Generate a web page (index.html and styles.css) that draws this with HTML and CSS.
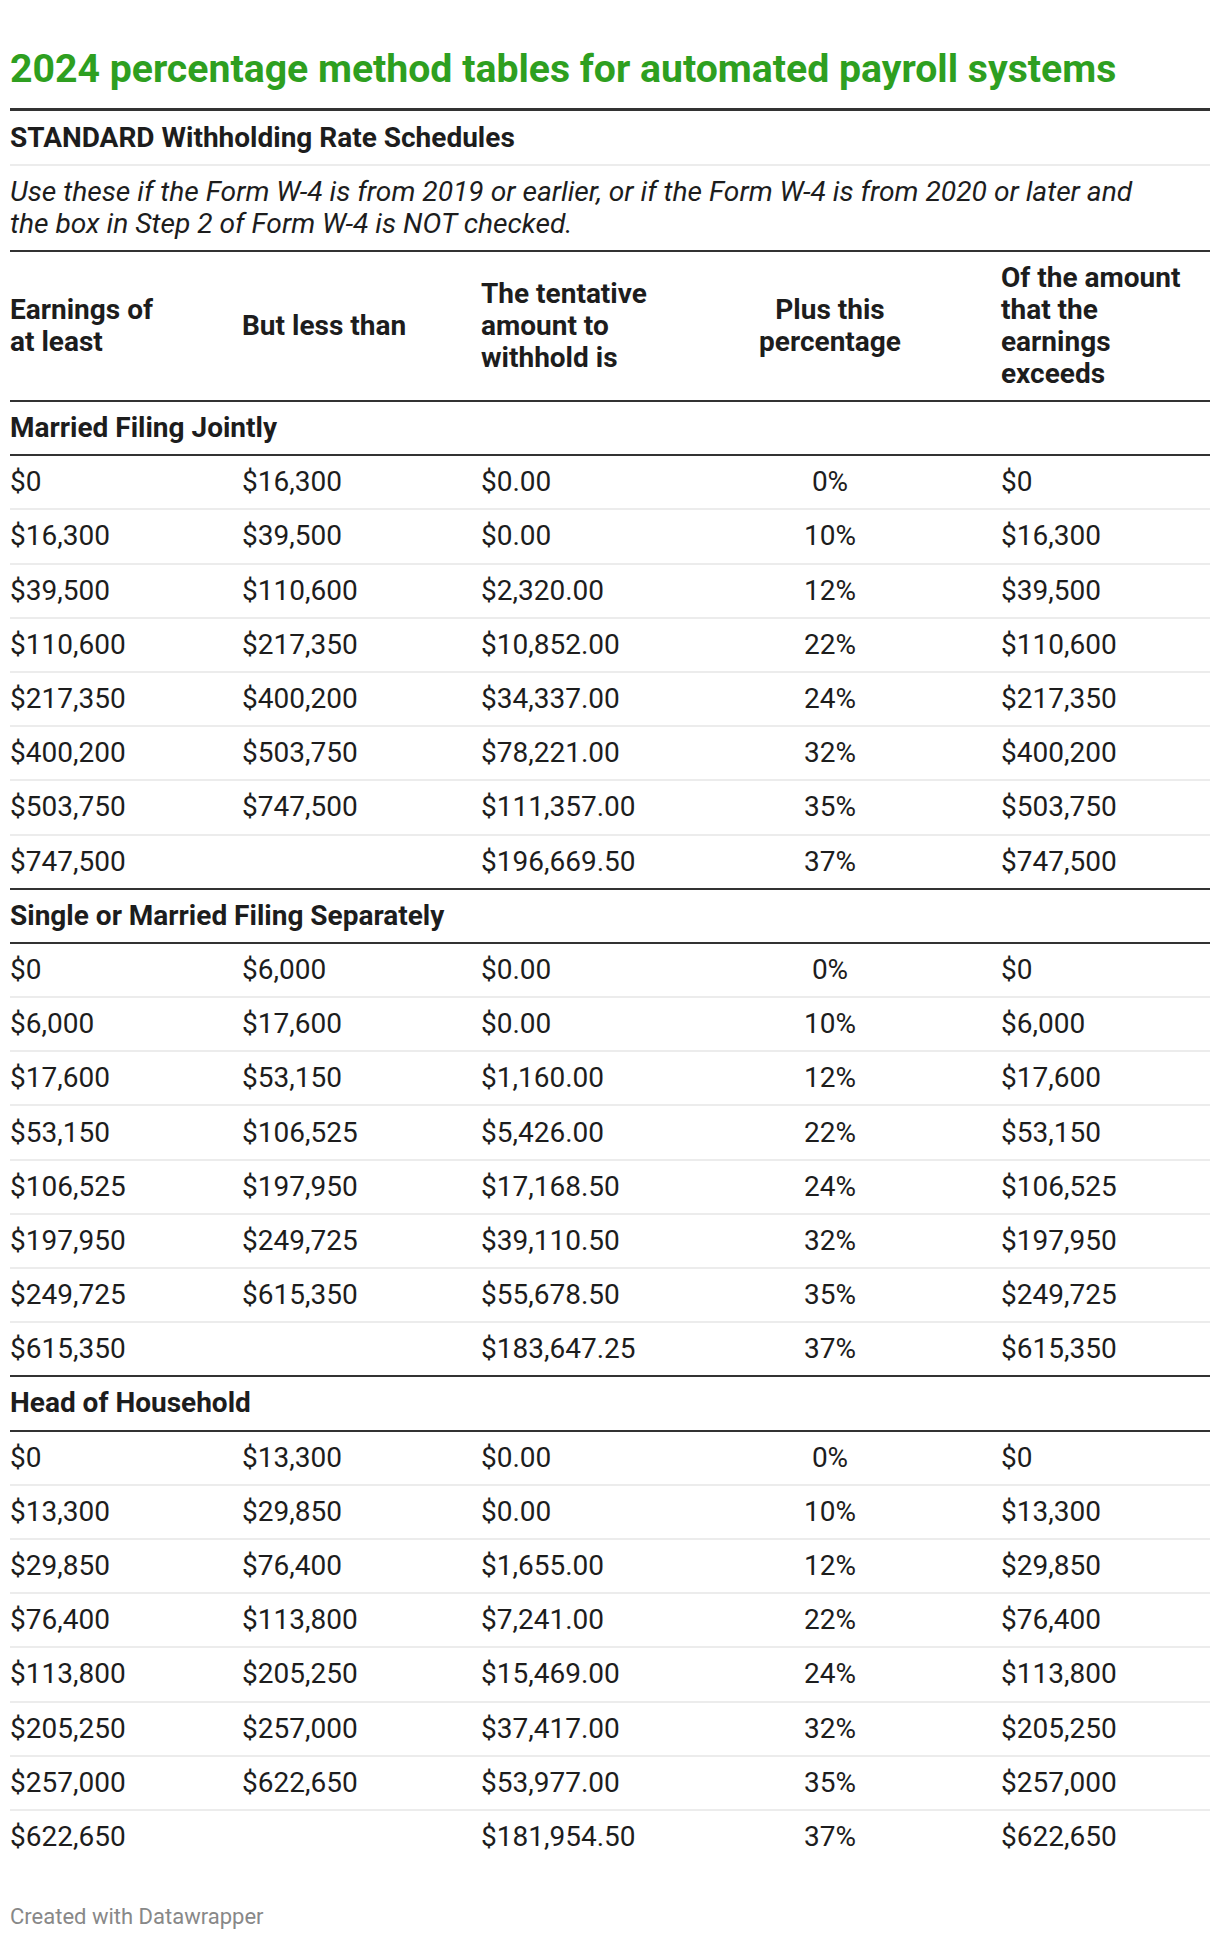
FILE: index.html
```html
<!DOCTYPE html>
<html lang="en">
<head>
<meta charset="utf-8">
<title>2024 percentage method tables for automated payroll systems</title>
<link rel="stylesheet" href="styles.css">
</head>
<body>
<div class="chart">
  <h1 class="title">2024 percentage method tables for automated payroll systems</h1>
  <div class="subhead">STANDARD Withholding Rate Schedules</div>
  <p class="intro">Use these if the Form W-4 is from 2019 or earlier, or if the Form W-4 is from 2020 or later and the box in Step 2 of Form W-4 is NOT checked.</p>
  <table class="rates">
    <colgroup>
      <col class="c1"><col class="c2"><col class="c3"><col class="c4"><col class="c5">
    </colgroup>
    <thead>
      <tr>
        <th class="h1">Earnings of at least</th>
        <th class="h2">But less than</th>
        <th class="h3">The tentative amount to withhold is</th>
        <th class="h4">Plus this percentage</th>
        <th class="h5">Of the amount that the earnings exceeds</th>
      </tr>
    </thead>
    <tbody>
      <tr class="group"><th colspan="5">Married Filing Jointly</th></tr>
      <tr><td>$0</td><td>$16,300</td><td>$0.00</td><td class="pct">0%</td><td>$0</td></tr>
      <tr><td>$16,300</td><td>$39,500</td><td>$0.00</td><td class="pct">10%</td><td>$16,300</td></tr>
      <tr><td>$39,500</td><td>$110,600</td><td>$2,320.00</td><td class="pct">12%</td><td>$39,500</td></tr>
      <tr><td>$110,600</td><td>$217,350</td><td>$10,852.00</td><td class="pct">22%</td><td>$110,600</td></tr>
      <tr><td>$217,350</td><td>$400,200</td><td>$34,337.00</td><td class="pct">24%</td><td>$217,350</td></tr>
      <tr><td>$400,200</td><td>$503,750</td><td>$78,221.00</td><td class="pct">32%</td><td>$400,200</td></tr>
      <tr><td>$503,750</td><td>$747,500</td><td>$111,357.00</td><td class="pct">35%</td><td>$503,750</td></tr>
      <tr class="last"><td>$747,500</td><td></td><td>$196,669.50</td><td class="pct">37%</td><td>$747,500</td></tr>
    </tbody>
    <tbody>
      <tr class="group"><th colspan="5">Single or Married Filing Separately</th></tr>
      <tr><td>$0</td><td>$6,000</td><td>$0.00</td><td class="pct">0%</td><td>$0</td></tr>
      <tr><td>$6,000</td><td>$17,600</td><td>$0.00</td><td class="pct">10%</td><td>$6,000</td></tr>
      <tr><td>$17,600</td><td>$53,150</td><td>$1,160.00</td><td class="pct">12%</td><td>$17,600</td></tr>
      <tr><td>$53,150</td><td>$106,525</td><td>$5,426.00</td><td class="pct">22%</td><td>$53,150</td></tr>
      <tr><td>$106,525</td><td>$197,950</td><td>$17,168.50</td><td class="pct">24%</td><td>$106,525</td></tr>
      <tr><td>$197,950</td><td>$249,725</td><td>$39,110.50</td><td class="pct">32%</td><td>$197,950</td></tr>
      <tr><td>$249,725</td><td>$615,350</td><td>$55,678.50</td><td class="pct">35%</td><td>$249,725</td></tr>
      <tr class="last"><td>$615,350</td><td></td><td>$183,647.25</td><td class="pct">37%</td><td>$615,350</td></tr>
    </tbody>
    <tbody>
      <tr class="group"><th colspan="5">Head of Household</th></tr>
      <tr><td>$0</td><td>$13,300</td><td>$0.00</td><td class="pct">0%</td><td>$0</td></tr>
      <tr><td>$13,300</td><td>$29,850</td><td>$0.00</td><td class="pct">10%</td><td>$13,300</td></tr>
      <tr><td>$29,850</td><td>$76,400</td><td>$1,655.00</td><td class="pct">12%</td><td>$29,850</td></tr>
      <tr><td>$76,400</td><td>$113,800</td><td>$7,241.00</td><td class="pct">22%</td><td>$76,400</td></tr>
      <tr><td>$113,800</td><td>$205,250</td><td>$15,469.00</td><td class="pct">24%</td><td>$113,800</td></tr>
      <tr><td>$205,250</td><td>$257,000</td><td>$37,417.00</td><td class="pct">32%</td><td>$205,250</td></tr>
      <tr><td>$257,000</td><td>$622,650</td><td>$53,977.00</td><td class="pct">35%</td><td>$257,000</td></tr>
      <tr class="final"><td>$622,650</td><td></td><td>$181,954.50</td><td class="pct">37%</td><td>$622,650</td></tr>
    </tbody>
  </table>
  <div class="footer">Created with Datawrapper</div>
</div>
</body>
</html>
```
FILE: styles.css
```css
html, body {
  margin: 0;
  padding: 0;
  background: #ffffff;
}

body {
  padding: 10px;
  font-family: Roboto, "Liberation Sans", sans-serif;
  color: #1d1d1d;
}

.chart {
  width: 1200px;
}

.title {
  margin: 35px 0 15px;
  font-size: 39.2px;
  line-height: 48px;
  font-weight: 700;
  color: #2e9f20;
}

.subhead {
  border-top: 3px solid #333333;
  border-bottom: 2px solid #ececec;
  padding: 10.5px 0;
  font-size: 28px;
  line-height: 32px;
  font-weight: 700;
}

.intro {
  margin: 0;
  padding: 10px 40px 10px 0;
  border-bottom: 2px solid #333333;
  font-size: 28.2px;
  line-height: 32px;
  font-style: italic;
}

.rates {
  width: 1200px;
  table-layout: fixed;
  border-collapse: separate;
  border-spacing: 0;
  font-size: 28px;
  line-height: 32px;
}

.c1 { width: 232px; }
.c2 { width: 239px; }
.c3 { width: 230px; }
.c4 { width: 290px; }
.c5 { width: 209px; }

.rates thead th {
  padding: 10px 0;
  border-bottom: 2px solid #333333;
  font-weight: 700;
  text-align: left;
  vertical-align: middle;
}

.rates thead .h1 { padding-right: 75px; }
.rates thead .h3 { padding-right: 40px; }
.rates thead .h4 { padding-left: 20px; padding-right: 72px; text-align: center; }
.rates thead .h5 { padding-right: 15px; }

.rates .group th {
  padding: 10.1px 0;
  border-bottom: 2px solid #333333;
  font-weight: 700;
  text-align: left;
}

.rates td {
  padding: 10.1px 0;
  border-bottom: 2px solid #ececec;
  font-weight: 400;
  text-align: left;
  white-space: nowrap;
}

.rates td.pct {
  padding-right: 52px;
  text-align: center;
}

.rates tr.last td {
  border-bottom-color: #333333;
}

.rates tr.final td {
  border-bottom: 0;
}

.footer {
  margin-top: 42px;
  font-size: 22px;
  line-height: 24px;
  color: #888888;
}
```
